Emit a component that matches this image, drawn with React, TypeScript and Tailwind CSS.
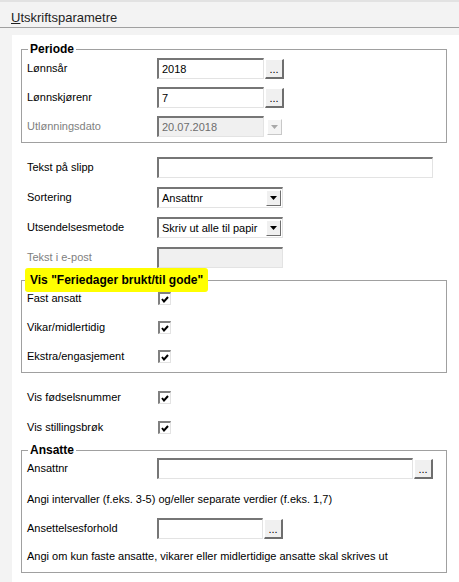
import React from 'react';

const font = "font-['Liberation_Sans',Arial,sans-serif]";
const inset =
  'border-t-2 border-l-2 border-r border-b border-t-[#767676] border-l-[#767676] border-r-[#e3e3e3] border-b-[#e3e3e3]';

const DotsButton: React.FC = () => (
  <div className="ml-[1px] flex h-[20px] w-[19px] items-end justify-center border-t border-l border-r-2 border-b-2 border-t-white border-l-white border-r-[#6e6e6e] border-b-[#6e6e6e] bg-[#f0f0f0] pb-[2px] text-[11px] leading-[11px] text-black">
    ...
  </div>
);

const TextBox: React.FC<{ width: number; value?: string; disabled?: boolean }> = ({ width, value, disabled }) => (
  <div
    className={`flex h-[21px] items-center pl-[3px] text-[11px] ${inset} ${disabled ? 'bg-[#f0f0f0] text-[#6d6d6d]' : 'bg-white text-black'}`}
    style={{ width }}
  >
    {value}
  </div>
);

const Select: React.FC<{ value: string }> = ({ value }) => (
  <div className={`flex h-[21px] w-[126px] items-center justify-between bg-white pl-[3px] text-[11px] text-black ${inset}`}>
    <span>{value}</span>
    <div className="mr-[1px] flex h-[16px] w-[15px] items-center justify-center border-t border-l border-r border-b border-t-white border-l-white border-r-[#6e6e6e] border-b-[#6e6e6e] bg-[#f0f0f0]">
      <svg width="7" height="4" viewBox="0 0 7 4">
        <polygon points="0,0 7,0 3.5,4" fill="#000" />
      </svg>
    </div>
  </div>
);

const Check: React.FC = () => (
  <div className="ml-[1px] flex h-[13px] w-[13px] items-center justify-center border-t-2 border-l-2 border-r border-b border-t-[#808080] border-l-[#808080] border-r-[#e3e3e3] border-b-[#e3e3e3] bg-white">
    <svg width="8" height="7" viewBox="0 0 8 7">
      <path d="M1 3 L3 5.5 L7 1" stroke="#000" strokeWidth="2" fill="none" />
    </svg>
  </div>
);

const Label: React.FC<{ children: React.ReactNode; disabled?: boolean }> = ({ children, disabled }) => (
  <div className={`w-[130px] shrink-0 text-[11px] ${disabled ? 'text-[#808080]' : 'text-black'}`}>{children}</div>
);

const Row: React.FC<{ children: React.ReactNode; className?: string }> = ({ children, className }) => (
  <div className={`flex items-center ${className ?? ''}`}>{children}</div>
);

export default function App() {
  return (
    <div className={`flex h-[582px] w-[459px] flex-col overflow-hidden bg-[#f3f3f3] ${font}`}>
      <div className="h-[27px] shrink-0 border-t-2 border-[#e2e2e2] pl-[11px] pt-[8px] text-[13px] leading-[15px] text-[#1e1e1e]">
        <span className="underline decoration-1 underline-offset-[1px]">U</span>tskriftsparametre
      </div>
      <div className="h-[1px] shrink-0 bg-[#a0a0a0]" />
      <div className="h-[7px] shrink-0" />
      <div className="ml-[12px] flex-1 bg-white">
        {/* Periode */}
        <fieldset className="ml-[9px] mt-[6px] w-[426px] border border-[#a0a0a0] px-[5px] pb-[5px]">
          <legend className="ml-[1px] px-[2px] text-[12px] font-bold leading-[16px] text-black">Periode</legend>
          <div className="flex flex-col gap-[8px] pt-[1px]">
            <Row>
              <Label>Lønnsår</Label>
              <TextBox width={107} value="2018" />
              <DotsButton />
            </Row>
            <Row>
              <Label>Lønnskjørenr</Label>
              <TextBox width={107} value="7" />
              <DotsButton />
            </Row>
            <Row>
              <Label disabled>Utlønningsdato</Label>
              <TextBox width={107} value="20.07.2018" disabled />
              <div className="ml-[3px] flex h-[16px] w-[15px] items-center justify-center border border-t-white border-l-white border-r-[#c8c8c8] border-b-[#c8c8c8] bg-[#f4f4f4]">
                <svg width="7" height="4" viewBox="0 0 7 4">
                  <polygon points="0,0 7,0 3.5,4" fill="#a8a8a8" />
                </svg>
              </div>
            </Row>
          </div>
        </fieldset>

        <div className="ml-[15px] mt-[14px] flex flex-col gap-[9px]">
          <Row>
            <Label>Tekst på slipp</Label>
            <TextBox width={276} />
          </Row>
          <Row>
            <Label>Sortering</Label>
            <Select value="Ansattnr" />
          </Row>
          <Row>
            <Label>Utsendelsesmetode</Label>
            <Select value="Skriv ut alle til papir" />
          </Row>
          <Row>
            <Label disabled>Tekst i e-post</Label>
            <TextBox width={126} disabled />
          </Row>
        </div>

        {/* Feriedager */}
        <fieldset className="ml-[9px] w-[426px] border border-[#a0a0a0] px-[5px] pb-[9px]">
          <legend className="-ml-[2px] rounded-[3px] bg-[#ffff00] px-[5px] py-[4px] text-[12px] font-bold leading-[16px] text-black">
            Vis "Feriedager brukt/til gode"
          </legend>
          <div className="flex flex-col gap-[16px]">
            <Row className="h-[13px]">
              <Label>Fast ansatt</Label>
              <Check />
            </Row>
            <Row className="h-[13px]">
              <Label>Vikar/midlertidig</Label>
              <Check />
            </Row>
            <Row className="h-[13px]">
              <Label>Ekstra/engasjement</Label>
              <Check />
            </Row>
          </div>
        </fieldset>

        <div className="ml-[15px] mt-[18px] flex flex-col gap-[17px]">
          <Row className="h-[13px]">
            <Label>Vis fødselsnummer</Label>
            <Check />
          </Row>
          <Row className="h-[13px]">
            <Label>Vis stillingsbrøk</Label>
            <Check />
          </Row>
        </div>

        {/* Ansatte */}
        <fieldset className="ml-[9px] mt-[8px] w-[426px] border border-[#a0a0a0] px-[5px] pb-[8px]">
          <legend className="ml-[1px] px-[2px] text-[12px] font-bold leading-[16px] text-black">Ansatte</legend>
          <Row>
            <Label>Ansattnr</Label>
            <TextBox width={256} />
            <DotsButton />
          </Row>
          <div className="mt-[13px] text-[11px] leading-[15px] text-black">
            Angi intervaller (f.eks. 3-5) og/eller separate verdier (f.eks. 1,7)
          </div>
          <Row className="mt-[11px]">
            <Label>Ansettelsesforhold</Label>
            <TextBox width={106} />
            <DotsButton />
          </Row>
          <div className="mt-[10px] text-[11px] leading-[15px] text-black">
            Angi om kun faste ansatte, vikarer eller midlertidige ansatte skal skrives ut
          </div>
        </fieldset>
      </div>
    </div>
  );
}
